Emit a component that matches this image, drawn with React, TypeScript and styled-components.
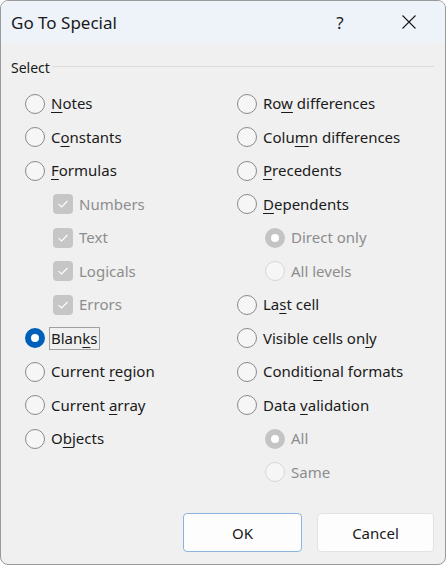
import React from 'react';
import styled, { createGlobalStyle } from 'styled-components';

type Opt = {
  label: string;
  key?: number; // index of the underlined access key
  kind: 'radio' | 'check';
  indent?: boolean;
  checked?: boolean;
  disabled?: boolean;
  focused?: boolean;
};

const leftOptions: Opt[] = [
  { label: 'Notes', key: 0, kind: 'radio' },
  { label: 'Constants', key: 1, kind: 'radio' },
  { label: 'Formulas', key: 0, kind: 'radio' },
  { label: 'Numbers', kind: 'check', indent: true, checked: true, disabled: true },
  { label: 'Text', kind: 'check', indent: true, checked: true, disabled: true },
  { label: 'Logicals', kind: 'check', indent: true, checked: true, disabled: true },
  { label: 'Errors', kind: 'check', indent: true, checked: true, disabled: true },
  { label: 'Blanks', key: 4, kind: 'radio', checked: true, focused: true },
  { label: 'Current region', key: 8, kind: 'radio' },
  { label: 'Current array', key: 8, kind: 'radio' },
  { label: 'Objects', key: 1, kind: 'radio' },
];

const rightOptions: Opt[] = [
  { label: 'Row differences', key: 2, kind: 'radio' },
  { label: 'Column differences', key: 4, kind: 'radio' },
  { label: 'Precedents', key: 0, kind: 'radio' },
  { label: 'Dependents', key: 0, kind: 'radio' },
  { label: 'Direct only', kind: 'radio', indent: true, checked: true, disabled: true },
  { label: 'All levels', kind: 'radio', indent: true, disabled: true },
  { label: 'Last cell', key: 2, kind: 'radio' },
  { label: 'Visible cells only', key: 16, kind: 'radio' },
  { label: 'Conditional formats', key: 7, kind: 'radio' },
  { label: 'Data validation', key: 5, kind: 'radio' },
  { label: 'All', kind: 'radio', indent: true, checked: true, disabled: true },
  { label: 'Same', kind: 'radio', indent: true, disabled: true },
];

const renderLabel = (o: Opt) => {
  if (o.key === undefined) return o.label;
  return (
    <>
      {o.label.slice(0, o.key)}
      <u>{o.label[o.key]}</u>
      {o.label.slice(o.key + 1)}
    </>
  );
};

const Option: React.FC<{ o: Opt }> = ({ o }) => (
  <Row $indent={!!o.indent}>
    {o.kind === 'radio' ? (
      <Radio $checked={!!o.checked} $disabled={!!o.disabled} />
    ) : (
      <Check>
        <svg width="12" height="10" viewBox="0 0 12 10">
          <path d="M1.5 5.2 L4.6 8 L10.5 2" fill="none" stroke="#fff" strokeWidth="1.1" />
        </svg>
      </Check>
    )}
    <Label $disabled={!!o.disabled} $focused={!!o.focused}>
      {renderLabel(o)}
    </Label>
  </Row>
);

const App: React.FC = () => (
  <>
    <GlobalStyle />
    <Window>
      <TitleBar>
        <Title>Go To Special</Title>
        <Help>?</Help>
        <Close>
          <svg width="14" height="14" viewBox="0 0 14 14">
            <path d="M0.5 0.5 L13.5 13.5 M13.5 0.5 L0.5 13.5" stroke="#1a1a1a" strokeWidth="1.1" />
          </svg>
        </Close>
      </TitleBar>
      <Body>
        <GroupHeader>
          <span>Select</span>
          <Rule />
        </GroupHeader>
        <Columns>
          <Column>
            {leftOptions.map((o) => (
              <Option key={o.label} o={o} />
            ))}
          </Column>
          <Column>
            {rightOptions.map((o) => (
              <Option key={o.label} o={o} />
            ))}
          </Column>
        </Columns>
        <Footer>
          <Button $primary>OK</Button>
          <Button>Cancel</Button>
        </Footer>
      </Body>
    </Window>
  </>
);
export default App;

/* ===== styled-components ===== */
const GlobalStyle = createGlobalStyle`
  html, body {
    margin: 0;
    padding: 0;
    background: #ffffff;
  }
  body {
    font-family: "Noto Sans", "Open Sans", sans-serif;
    color: #1a1a1a;
  }
`;

const Window = styled.div`
  width: 446px;
  height: 565px;
  box-sizing: border-box;
  border: 1px solid #9a9a9a;
  border-radius: 8px;
  overflow: hidden;
  background: #f0f0f0;
  display: flex;
  flex-direction: column;
`;

const TitleBar = styled.div`
  height: 42px;
  flex: none;
  background: #eef3fa;
  display: flex;
  align-items: center;
  padding-left: 10px;
`;

const Title = styled.div`
  font-size: 17px;
  flex: 1;
`;

const Help = styled.div`
  font-size: 17px;
  width: 20px;
  text-align: center;
  margin-right: 52px;
`;

const Close = styled.div`
  width: 14px;
  height: 14px;
  display: flex;
  margin-right: 29px;
`;

const Body = styled.div`
  flex: 1;
  display: flex;
  flex-direction: column;
  padding: 13px 11px 12px 10px;
`;

const GroupHeader = styled.div`
  height: 22px;
  display: flex;
  align-items: center;
  gap: 2px;
  font-size: 14px;
`;

const Rule = styled.div`
  flex: 1;
  height: 1px;
  background: #dcdcdc;
  margin-top: -2px;
`;

const Columns = styled.div`
  display: grid;
  grid-template-columns: 212px 1fr;
  padding-left: 14px;
  margin-top: 9px;
`;

const Column = styled.div`
  display: flex;
  flex-direction: column;
`;

const Row = styled.div<{ $indent: boolean }>`
  height: 33.5px;
  display: flex;
  align-items: center;
  gap: 6px;
  padding-left: ${(p) => (p.$indent ? '28px' : '0')};
  font-size: 15px;
`;

const Radio = styled.span<{ $checked: boolean; $disabled: boolean }>`
  width: 20px;
  height: 20px;
  box-sizing: border-box;
  border-radius: 50%;
  flex: none;
  ${(p) =>
    p.$checked
      ? `background: #fff; border: 6px solid ${p.$disabled ? '#c4c4c4' : '#005fb8'};`
      : `background: #f6f6f6; border: 1px solid ${p.$disabled ? '#d6d6d6' : '#8a8a8a'};`}
`;

const Check = styled.span`
  width: 20px;
  height: 20px;
  border-radius: 4px;
  background: #c6c6c6;
  flex: none;
  display: flex;
  align-items: center;
  justify-content: center;
`;

const Label = styled.span<{ $disabled: boolean; $focused: boolean }>`
  color: ${(p) => (p.$disabled ? '#8d8d8d' : '#1a1a1a')};
  border: 1px solid ${(p) => (p.$focused ? '#a0a0a0' : 'transparent')};
  padding: 0 1px;
  margin-left: -2px;
  line-height: 21px;

  u {
    text-underline-offset: 3px;
  }
`;

const Footer = styled.div`
  margin-top: auto;
  display: flex;
  justify-content: flex-end;
  gap: 15px;
`;

const Button = styled.button<{ $primary?: boolean }>`
  width: ${(p) => (p.$primary ? '119px' : '117px')};
  height: 39px;
  box-sizing: border-box;
  background: #fdfdfd;
  border: 1px solid ${(p) => (p.$primary ? '#8cb4e0' : '#e2e2e2')};
  border-radius: 4px;
  font-family: inherit;
  font-size: 15px;
  color: #1a1a1a;
  padding: 0;
`;
